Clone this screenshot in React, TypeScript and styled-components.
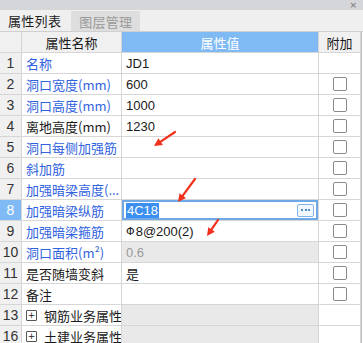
import React from 'react';
import styled, { createGlobalStyle } from 'styled-components';

const GlobalStyle = createGlobalStyle`
  html, body {
    margin: 0;
    padding: 0;
    background: #ffffff;
  }
  body {
    font-family: "Noto Sans CJK SC", "Liberation Sans", sans-serif;
    font-size: 13px;
    color: #1a1a1a;
  }
`;

const Panel = styled.div`
  position: relative;
  width: 363px;
  height: 343px;
  overflow: hidden;
  background: #ffffff;
`;

const TitleBar = styled.div`
  height: 10px;
  background: #d5d6da;
  display: flex;
  justify-content: flex-end;
  align-items: center;
  padding-right: 6px;
`;

const CloseMark = styled.span`
  font-family: "DejaVu Sans", sans-serif;
  font-size: 9px;
  line-height: 9px;
  color: #8a8a8a;
  font-weight: bold;
`;

const TabBar = styled.div`
  height: 21px;
  background: #efefef;
  border-bottom: 1px solid #cfcfcf;
  display: flex;
  align-items: stretch;
`;

const Tab = styled.div<{ $active?: boolean }>`
  padding: 0 8px;
  display: flex;
  align-items: center;
  font-size: 13px;
  letter-spacing: 0.3px;
  color: ${p => (p.$active ? '#1c1c1c' : '#9a9a9a')};
  background: ${p => (p.$active ? '#efefef' : '#dedede')};
  margin-left: ${p => (p.$active ? '0' : '2px')};
  margin-top: ${p => (p.$active ? '0' : '1px')};
`;

const Grid = styled.div`
  display: grid;
  grid-template-columns: 22px 100px 197px 42px;
  grid-auto-rows: 21px;
  border-right: 1px solid #bdbdbd;
  width: 361px;
`;

const Cell = styled.div<{ $bg?: string; $color?: string; $center?: boolean }>`
  box-sizing: border-box;
  border-right: 1px solid #d6d6d6;
  border-bottom: 1px solid #d6d6d6;
  background: ${p => p.$bg || '#ffffff'};
  color: ${p => p.$color || '#1a1a1a'};
  display: flex;
  align-items: center;
  justify-content: ${p => (p.$center ? 'center' : 'flex-start')};
  padding: ${p => (p.$center ? '0' : '0 4px')};
  white-space: nowrap;
  overflow: hidden;
  font-size: 13px;
  position: relative;
`;

const NumCell = styled(Cell)`
  font-family: "Liberation Sans", sans-serif;
  font-size: 14px;
  color: ${p => p.$color || '#333333'};
`;

const Value = styled.span<{ $muted?: boolean }>`
  font-family: "Liberation Sans", "Noto Sans CJK SC", sans-serif;
  font-size: 13px;
  color: ${p => (p.$muted ? '#9a9a9a' : '#1a1a1a')};
`;

const Grade = styled.span`
  font-family: "DejaVu Sans", sans-serif;
  font-size: 11px;
  margin-right: 1px;
  position: relative;
  top: -1px;
`;

const Editor = styled.div`
  position: absolute;
  inset: 0 0 0 0;
  border: 2px solid #6ea8e6;
  display: flex;
  align-items: center;
  justify-content: space-between;
  padding: 0 2px 0 2px;
  background: #ffffff;
`;

const Selected = styled.span`
  background: #3b8ff0;
  color: #ffffff;
  font-family: "Liberation Sans", sans-serif;
  font-size: 13px;
  padding: 0 1px;
  line-height: 15px;
`;

const DotsButton = styled.div`
  width: 15px;
  height: 11px;
  border: 1px solid #7fb2e8;
  border-radius: 2px;
  background: #f3f8fe;
  display: flex;
  align-items: center;
  justify-content: center;
  gap: 1.5px;
  & > i {
    width: 2px;
    height: 2px;
    background: #4d8fd6;
    display: block;
  }
`;

const Check = styled.div`
  width: 12px;
  height: 12px;
  border: 1px solid #8a8a8a;
  border-radius: 2px;
  background: #ffffff;
`;

const Expander = styled.span`
  flex: none;
  box-sizing: border-box;
  width: 11px;
  height: 11px;
  border: 1px solid #555;
  border-radius: 1px;
  display: inline-flex;
  align-items: center;
  justify-content: center;
  font-family: "DejaVu Sans", sans-serif;
  font-size: 9px;
  line-height: 9px;
  margin: 0 7px 0 0;
  color: #222;
`;

const Arrow = styled.svg`
  position: absolute;
  overflow: visible;
  pointer-events: none;
`;

type Row = {
  no: string;
  name: React.ReactNode;
  blue?: boolean;
  value?: React.ReactNode;
  readonly?: boolean;
  check?: boolean;
  group?: boolean;
  editing?: boolean;
};

const BLUE = '#2f62e0';

const rows: Row[] = [
  { no: '1', name: '名称', blue: true, value: 'JD1' },
  { no: '2', name: '洞口宽度(mm)', blue: true, value: '600', check: true },
  { no: '3', name: '洞口高度(mm)', blue: true, value: '1000', check: true },
  { no: '4', name: '离地高度(mm)', value: '1230', check: true },
  { no: '5', name: '洞口每侧加强筋', blue: true, check: true },
  { no: '6', name: '斜加筋', blue: true, check: true },
  { no: '7', name: '加强暗梁高度(...', blue: true, check: true },
  { no: '8', name: '加强暗梁纵筋', blue: true, editing: true, check: true },
  {
    no: '9',
    name: '加强暗梁箍筋',
    blue: true,
    value: (
      <>
        <Grade>Φ</Grade>8@200(2)
      </>
    ),
    check: true,
  },
  { no: '10', name: '洞口面积(m²)', blue: true, value: '0.6', readonly: true, check: true },
  { no: '11', name: '是否随墙变斜', value: '是', check: true },
  { no: '12', name: '备注', check: true },
  { no: '13', name: '钢筋业务属性', group: true },
  { no: '16', name: '土建业务属性', group: true },
];

const RedArrow: React.FC<{ x1: number; y1: number; x2: number; y2: number }> = ({ x1, y1, x2, y2 }) => {
  const ang = Math.atan2(y2 - y1, x2 - x1);
  const len = 8;
  const w = 4;
  const bx = x2 - Math.cos(ang) * len;
  const by = y2 - Math.sin(ang) * len;
  const px = -Math.sin(ang) * w;
  const py = Math.cos(ang) * w;
  return (
    <Arrow style={{ left: 0, top: 0 }} width="363" height="343">
      <line x1={x1} y1={y1} x2={bx} y2={by} stroke="#f2311c" strokeWidth="2.2" strokeLinecap="round" />
      <polygon points={`${x2},${y2} ${bx + px},${by + py} ${bx - px},${by - py}`} fill="#f2311c" />
    </Arrow>
  );
};

const App: React.FC = () => {
  return (
    <Panel>
      <GlobalStyle />
      <TitleBar>
        <CloseMark>×</CloseMark>
      </TitleBar>
      <TabBar>
        <Tab $active>属性列表</Tab>
        <Tab>图层管理</Tab>
      </TabBar>
      <Grid>
        <Cell $bg="#f0f0f0" />
        <Cell $bg="#f0f0f0" $center>属性名称</Cell>
        <Cell $bg="#80baf4" $color="#ffffff" $center>属性值</Cell>
        <Cell $bg="#f0f0f0" $center>附加</Cell>
        {rows.map(r => (
          <React.Fragment key={r.no}>
            <NumCell $bg={r.editing ? '#80baf4' : '#f0f0f0'} $color={r.editing ? '#ffffff' : undefined} $center>
              {r.no}
            </NumCell>
            <Cell $color={r.blue ? BLUE : '#1a1a1a'}>
              {r.group && <Expander>+</Expander>}
              {r.name}
            </Cell>
            <Cell $bg={r.readonly || r.group ? '#e9e9e9' : '#ffffff'}>
              {r.editing ? (
                <Editor>
                  <Selected>4C18</Selected>
                  <DotsButton>
                    <i />
                    <i />
                    <i />
                  </DotsButton>
                </Editor>
              ) : (
                <Value $muted={r.readonly}>{r.value}</Value>
              )}
            </Cell>
            <Cell $center>{r.check && <Check />}</Cell>
          </React.Fragment>
        ))}
      </Grid>
      <RedArrow x1={175} y1={132} x2={154} y2={146} />
      <RedArrow x1={195} y1={179} x2={178} y2={202} />
      <RedArrow x1={218} y1={220} x2={207} y2={236} />
    </Panel>
  );
};

export default App;
